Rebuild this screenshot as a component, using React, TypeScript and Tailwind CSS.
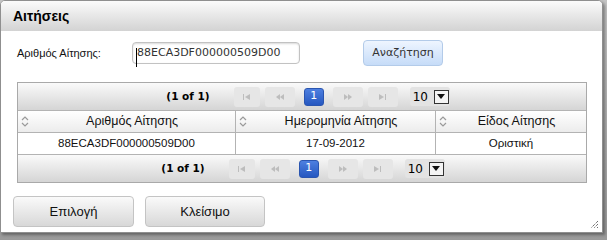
import React from 'react';

// Small icons used by the paginator and table header
const SortIcon = () => (
  <svg width="8" height="11" viewBox="0 0 8 11" className="shrink-0">
    <path d="M1 4 L4 1 L7 4" fill="none" stroke="#9a9a9a" strokeWidth="1.2" />
    <path d="M1 7 L4 10 L7 7" fill="none" stroke="#9a9a9a" strokeWidth="1.2" />
  </svg>
);

const PagerIcon = ({ kind }: { kind: 'first' | 'prev' | 'next' | 'last' }) => {
  const c = '#bdbdbd';
  if (kind === 'first')
    return (
      <svg width="9" height="6" viewBox="0 0 9 6">
        <rect x="1" y="0" width="1" height="6" fill={c} />
        <path d="M8 0 L3 3 L8 6 Z" fill={c} />
      </svg>
    );
  if (kind === 'prev')
    return (
      <svg width="10" height="6" viewBox="0 0 10 6">
        <path d="M5 0 L1 3 L5 6 Z" fill={c} />
        <path d="M9 0 L5 3 L9 6 Z" fill={c} />
      </svg>
    );
  if (kind === 'next')
    return (
      <svg width="10" height="6" viewBox="0 0 10 6">
        <path d="M1 0 L5 3 L1 6 Z" fill={c} />
        <path d="M5 0 L9 3 L5 6 Z" fill={c} />
      </svg>
    );
  return (
    <svg width="9" height="6" viewBox="0 0 9 6">
      <path d="M1 0 L6 3 L1 6 Z" fill={c} />
      <rect x="7" y="0" width="1" height="6" fill={c} />
    </svg>
  );
};

const Paginator = ({ bottom }: { bottom?: boolean }) => (
  <div
    className={`h-[28px] flex items-center justify-center bg-gradient-to-b from-[#fafafa] to-[#d5d5d5] ${
      bottom ? 'border-t border-[#b3b3b3] pl-[2px]' : 'border-b border-[#b3b3b3] pl-[12px]'
    }`}
  >
    <span className="font-['DejaVu_Sans',sans-serif] font-bold text-[10.5px] text-black mr-[24px]">(1 of 1)</span>
    <div className="flex items-center gap-[5px]">
      <div className="w-[26px] h-[20px] rounded-[3px] bg-[#e6e6e6] flex items-center justify-center">
        <PagerIcon kind="first" />
      </div>
      <div className="w-[30px] h-[20px] rounded-[3px] bg-[#e6e6e6] flex items-center justify-center">
        <PagerIcon kind="prev" />
      </div>
      <div className="w-[20px] h-[18px] mx-[4px] rounded-[3px] bg-gradient-to-b from-[#4d7fe0] to-[#2657c0] border border-[#2a55b0] flex items-center justify-center text-white text-[11px] font-['DejaVu_Sans',sans-serif]">
        1
      </div>
      <div className="w-[30px] h-[20px] rounded-[3px] bg-[#e6e6e6] flex items-center justify-center">
        <PagerIcon kind="next" />
      </div>
      <div className="w-[30px] h-[20px] rounded-[3px] bg-[#e6e6e6] flex items-center justify-center">
        <PagerIcon kind="last" />
      </div>
      <div className="ml-[7px] w-[40px] h-[19px] rounded-[3px] bg-[#e3e3e3] flex items-center pl-[3px]">
        <span className="text-[12px] font-['DejaVu_Sans',sans-serif] text-black w-[21px]">10</span>
        <div className="w-[15px] h-[14px] border border-[#333] bg-[#f4f4f4] flex items-center justify-center">
          <svg width="8" height="5" viewBox="0 0 8 5">
            <path d="M0 0 L8 0 L4 5 Z" fill="#111" />
          </svg>
        </div>
      </div>
    </div>
  </div>
);

export default function App() {
  return (
    <div className="w-[607px] h-[240px] bg-gradient-to-b from-[#c4c4c4] to-[#9a9a9a] font-['Liberation_Sans',sans-serif]">
      <div className="relative w-[603px] h-[233px] bg-white border border-[#8f8f8f] rounded-t-[5px] shadow-[2px_2px_3px_rgba(0,0,0,0.35)] flex flex-col overflow-hidden">
        {/* title bar */}
        <div className="h-[30px] shrink-0 bg-gradient-to-b from-[#fbfbfb] to-[#d3d3d3] flex items-center pl-[12px]">
          <span className="text-[14px] font-bold text-black">Αιτήσεις</span>
        </div>

        {/* search row */}
        <div className="flex items-center h-[26px] mt-[9px] pl-[16px]">
          <span className="text-[11px] text-[#111] w-[115px]">Αριθμός Αίτησης:</span>
          <div className="relative w-[168px] h-[22px] border border-[#c2c2c2] rounded-[4px] shadow-[inset_0_1px_2px_rgba(0,0,0,0.15)] flex items-center pl-[4px]">
            <span className="text-[11px] font-['DejaVu_Sans',sans-serif] text-[#333]">88ECA3DF000000509D00</span>
            <div className="absolute left-[3px] top-[5px] w-px h-[19px] bg-black" />
          </div>
          <button className="ml-[63px] w-[80px] h-[26px] rounded-[4px] border border-[#b3cbe9] bg-gradient-to-b from-[#eef5ff] to-[#c6dcf8] text-[11px] font-['DejaVu_Sans',sans-serif] text-[#333]">
            Αναζήτηση
          </button>
        </div>

        {/* table */}
        <div className="mt-[16px] ml-[16px] w-[570px] border border-[#a9a9a9]">
          <Paginator />
          <div className="flex h-[22px] bg-gradient-to-b from-[#ffffff] to-[#ececec] border-b border-[#b3b3b3] text-[12.5px] text-[#111]">
            <div className="w-[218px] flex items-center pl-[3px] border-r border-[#b3b3b3]">
              <SortIcon />
              <span className="flex-1 text-center">Αριθμός Αίτησης</span>
            </div>
            <div className="w-[200px] flex items-center pl-[3px] border-r border-[#b3b3b3]">
              <SortIcon />
              <span className="flex-1 text-center">Ημερομηνία Αίτησης</span>
            </div>
            <div className="flex-1 flex items-center pl-[3px]">
              <SortIcon />
              <span className="flex-1 text-center">Είδος Αίτησης</span>
            </div>
          </div>
          <div className="flex h-[21px] text-[11.5px] text-[#111]">
            <div className="w-[218px] flex items-center justify-center border-r border-[#b3b3b3]">88ECA3DF000000509D00</div>
            <div className="w-[200px] flex items-center justify-center border-r border-[#b3b3b3]">17-09-2012</div>
            <div className="flex-1 flex items-center justify-center">Οριστική</div>
          </div>
          <Paginator bottom />
        </div>

        {/* action buttons */}
        <div className="flex gap-[11px] mt-[13px] pl-[12px]">
          <button className="w-[121px] h-[31px] rounded-[4px] border border-[#c4c4c4] bg-gradient-to-b from-[#fafafa] to-[#d8d8d8] text-[13px] text-[#111]">
            Επιλογή
          </button>
          <button className="w-[120px] h-[31px] rounded-[4px] border border-[#c4c4c4] bg-gradient-to-b from-[#fafafa] to-[#d8d8d8] text-[13px] text-[#111]">
            Κλείσιμο
          </button>
        </div>

        {/* resize grip */}
        <svg width="9" height="9" viewBox="0 0 9 9" className="absolute right-[3px] bottom-[3px]">
          <path d="M8 1 L1 8 M8 4 L4 8 M8 7 L7 8" stroke="#333" strokeWidth="1" strokeDasharray="1 1" />
        </svg>
      </div>
    </div>
  );
}
